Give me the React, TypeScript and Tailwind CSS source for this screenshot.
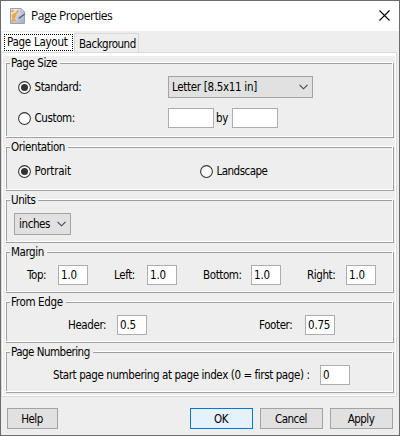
import type { ReactNode } from 'react';

function Group({ title, titleClass = '', className, children }: { title: string; titleClass?: string; className: string; children: ReactNode }) {
  return (
    <section
      className={`relative w-[388px] border border-white shadow-[1px_1px_0_#a0a0a0,inset_1px_1px_0_#a0a0a0] ${className}`}
    >
      <h2 className={`absolute -top-[7px] left-[4px] bg-[#eee] pr-[3px] pl-[1px] leading-[14px] ${titleClass}`}>{title}</h2>
      {children}
    </section>
  );
}

function Radio({ label, checked, labelClass = '' }: { label: string; checked?: boolean; labelClass?: string }) {
  return (
    <div className="flex h-[13px] items-center gap-[3.5px]">
      <svg width="13" height="13" viewBox="0 0 13 13">
        <circle cx="6.5" cy="6.5" r="5.9" fill="#fff" stroke="#333" strokeWidth="1.05" />
        {checked && <circle cx="6.5" cy="6.5" r="3.5" fill="#333" />}
      </svg>
      <span className={`leading-[17px] ${labelClass}`}>{label}</span>
    </div>
  );
}

function Select({ text, className }: { text: string; className: string }) {
  return (
    <div className={`flex h-[22px] items-center justify-between border border-[#a3a3a3] bg-[#e1e1e1] pr-[4px] ${className}`}>
      <span className="leading-[18px]">{text}</span>
      <svg width="9" height="6" viewBox="0 0 9 6" fill="none" stroke="#444" strokeWidth="1.1">
        <path d="M.5 .8 4.5 4.8 8.5 .8" />
      </svg>
    </div>
  );
}

function Field({ value = '', className = 'w-[30px]' }: { value?: string; className?: string }) {
  return (
    <div className={`h-[20px] border border-[#abadb3] bg-white pl-[2px] leading-[18px] tracking-[-0.2px] ${className}`}>
      {value}
    </div>
  );
}

function Button({ label, className = 'w-[63px] border-[#a3a3a3] bg-[#e1e1e1]' }: { label: string; className?: string }) {
  return <button className={`h-[21px] border pr-[1px] text-center leading-[18px] tracking-[-0.55px] ${className}`}>{label}</button>;
}

function AppIcon() {
  return (
    <svg width="16" height="16" viewBox="0 0 16 16">
      <defs>
        <linearGradient id="paper" x1="0" y1="0" x2="1" y2="1">
          <stop offset="0" stopColor="#f4f5fa" />
          <stop offset="1" stopColor="#a3a9c4" />
        </linearGradient>
      </defs>
      <path d="M.5 .5h10.500l3.500 3.500v11.500h-14z" fill="url(#paper)" stroke="#9aa0b6" />
      <path d="M11 .5v3.500h3.500z" fill="#e8eaf2" stroke="#9a9fb2" strokeWidth=".7" />
      <path d="M1.500 4 3.500 2M2 8.500l2.500-3M5 6.500 8.500 2.500M2.500 10.500 6 7M2 14l2-4M4.500 13 5.500 11.500" stroke="#f5a32c" strokeWidth="1.800" fill="none" />
      <path d="M8 10.800 14.800 6" stroke="#59627b" strokeWidth="1.500" />
      <path d="M6.500 11.800 9 10" stroke="#d7dae6" strokeWidth="1" />
    </svg>
  );
}

export default function App() {
  return (
    <div className="flex h-[436px] w-[400px] flex-col border border-[#6c6a6a] bg-[#eee] font-['DejaVu_Sans_Condensed','DejaVu_Sans',sans-serif] text-[11.5px] leading-[18px] tracking-[-0.4px] whitespace-nowrap text-black [font-stretch:condensed]">
      <header className="flex h-[30px] items-center bg-white pl-[9px]">
        <AppIcon />
        <h1 className="ml-[5px] font-['Open_Sans',sans-serif] text-[12px] tracking-[-0.47px] [font-stretch:normal]">
          Page Properties
        </h1>
        <svg className="mt-[-1px] mr-[9px] ml-auto" width="11" height="11" viewBox="0 0 11 11" stroke="#000" strokeWidth="1.1">
          <path d="M.5 .5l10 10M10.500 .5l-10 10" />
        </svg>
      </header>

      <nav className="flex h-[21px] items-end pl-[1px]">
        <div className="h-[20px] w-[72px] bg-white p-[2px]">
          <div className="h-[17px] w-[69px] border border-dotted border-black pl-[2px] leading-[14px] tracking-[-0.27px]">
            Page Layout
          </div>
        </div>
        <div className="h-[19px] w-[65px] border border-b-0 border-[#d9d9d9] pl-[4px] leading-[20px] tracking-[-0.5px]">
          Background
        </div>
      </nav>

      <main className="flex h-[345px] w-[396px] flex-col border border-[#d9d9d9] bg-[#eee]">
        <div className="flex h-full flex-col border-t-[3px] border-r border-b border-l border-white pl-[2px]">
          <Group title="Page Size" className="mt-[6px] h-[75px]">
            <div className="mt-[13px] flex h-[22px] items-center pl-[12px]">
              <div className="w-[150px]"><Radio label="Standard:" checked /></div>
              <Select text="Letter [8.5x11 in]" className="w-[145px] pl-[3px] tracking-[-0.31px]" />
            </div>
            <div className="mt-[10px] flex h-[20px] items-center pl-[12px]">
              <div className="w-[150px]"><Radio label="Custom:" /></div>
              <Field className="w-[46px]" />
              <span className="w-[18px] pl-[2px]">by</span>
              <Field className="w-[46px]" />
            </div>
          </Group>
          <Group title="Orientation" className="mt-[9px] h-[44px]">
            <div className="mt-[18px] flex pl-[12px]">
              <div className="w-[182px]"><Radio label="Portrait" labelClass="tracking-[-0.2px]" checked /></div>
              <Radio label="Landscape" labelClass="tracking-[-0.52px]" />
            </div>
          </Group>
          <Group title="Units" className="mt-[9px] h-[43px]">
            <div className="mt-[13px] pl-[8px]"><Select text="inches" className="w-[57px] pl-[4px]" /></div>
          </Group>
          <Group title="Margin" className="mt-[9px] h-[41px]">
            <div className="mt-[13px] flex items-center pl-[21px]">
              <span className="w-[31px]">Top:</span><Field value="1.0" />
              <span className="ml-[26px] w-[33px]">Left:</span><Field value="1.0" />
              <span className="ml-[26px] w-[48px]">Bottom:</span><Field value="1.0" />
              <span className="ml-[26px] w-[39px]">Right:</span><Field value="1.0" />
            </div>
          </Group>
          <Group title="From Edge" titleClass="tracking-[-0.35px]" className="mt-[9px] h-[41px]">
            <div className="mt-[13px] flex items-center pl-[62px]">
              <span className="w-[49px]">Header:</span><Field value="0.5" />
              <span className="ml-[112px] w-[46px]">Footer:</span><Field value="0.75" />
            </div>
          </Group>
          <Group title="Page Numbering" titleClass="tracking-[-0.51px]" className="mt-[9px] h-[41px]">
            <div className="mt-[13px] flex items-center pl-[47px]">
              <span className="w-[267px] tracking-[-0.4px]">Start page numbering at page index (0 = first page) :</span>
              <Field value="0" />
            </div>
          </Group>
        </div>
      </main>

      <footer className="mt-[11px] flex gap-[7px] pl-[6px]">
        <Button label="Help" className="mr-[125px] w-[51px] border-[#a3a3a3] bg-[#e1e1e1]" />
        <Button label="OK" className="w-[63px] border-[#0078d7] bg-[#e5f1fb]" />
        <Button label="Cancel" />
        <Button label="Apply" />
      </footer>
    </div>
  );
}
